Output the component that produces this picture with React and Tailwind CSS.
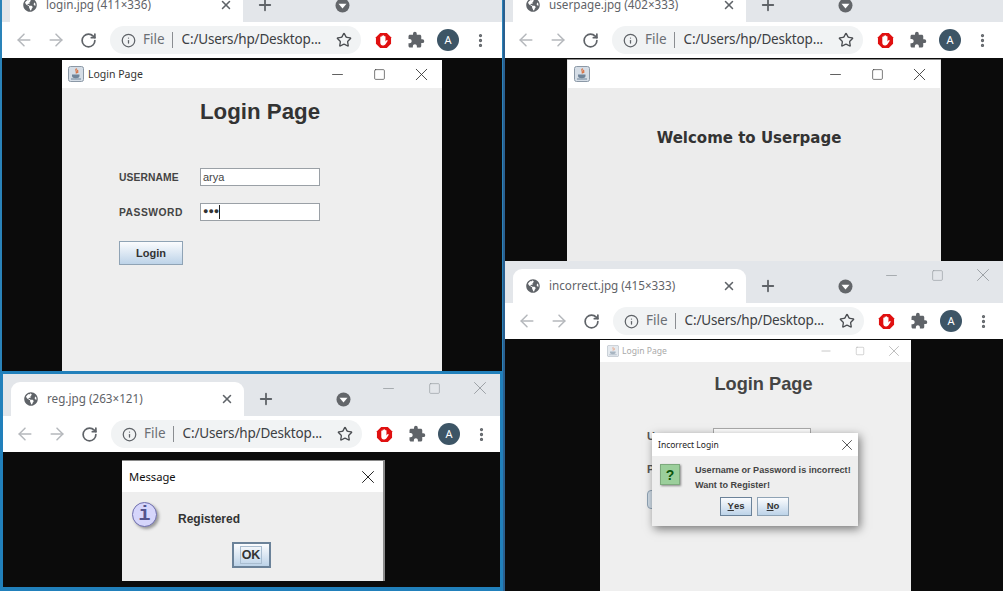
import React from "react";
import { ArrowLeft, ArrowRight, RotateCw, Info, Star, Plus, X, Minus, Square, EllipsisVertical } from "lucide-react";
import { FaGlobeAmericas } from "react-icons/fa";
import { MdExtension } from "react-icons/md";

const ui = "font-['Noto_Sans',sans-serif]";
const arial = "font-['Liberation_Sans',Arial,sans-serif]";

function StopIcon() {
  return (
    <svg width="17" height="17" viewBox="0 0 18 18">
      <path d="M5.5 1h7L17 5.500v7L12.500 17h-7L1 12.500v-7z" fill="#e01010" />
      <path d="M5.600 9V5.600c0-1 1.300-1 1.300 0V4.500c0-1 1.400-1 1.400 0v-.4c0-1 1.400-1 1.400 0v.9c0-1 1.400-1 1.400 0v5l.9-1.100c.7-.8 1.700 0 1.200.8l-2.100 3.400c-.5.8-1.200 1.200-2.200 1.200H8.300c-1.600 0-2.700-1.100-2.700-2.800z" fill="#fff" />
    </svg>
  );
}

function JavaIcon({ size = 16, faded }) {
  return (
    <svg width={size} height={size} viewBox="0 0 16 16" className={faded ? "opacity-60" : ""}>
      <rect x="0.5" y="0.5" width="15" height="15" rx="2" fill="#d5dde6" stroke="#8b98a6" />
      <path d="M8.500 2.500c-2 2 1 3-.5 5M10 4c-1 1 .5 1.500-.5 3" fill="none" stroke="#d9622b" strokeWidth="1.1" />
      <path d="M4 8.500h7.500v1.500c0 1.500-1.500 2.200-3.700 2.200S4 11.500 4 10z" fill="#6f8499" />
      <path d="M3 13h10" stroke="#6f8499" />
    </svg>
  );
}

function Toolbar({ pad }) {
  return (
    <div className={`flex h-[36px] shrink-0 items-center bg-white ${pad}`}>
      <span className="flex w-8 justify-center text-[#b5b8bc]"><ArrowLeft size={20} strokeWidth={1.8} /></span>
      <span className="flex w-8 justify-center text-[#b5b8bc]"><ArrowRight size={20} strokeWidth={1.8} /></span>
      <span className="flex w-8 justify-center text-[#5f6368]"><RotateCw size={17} strokeWidth={2.4} /></span>
      <div className={`ml-[6px] flex h-[28px] w-[251px] shrink-0 items-center rounded-full bg-[#f1f3f4] pl-[11px] ${ui}`}>
        <Info size={15} className="text-[#5f6368]" strokeWidth={2} />
        <span className="ml-[7px] text-[13.500px] leading-none text-[#6b6f74]">File</span>
        <span className="ml-[7px] h-[16px] w-px bg-[#8a8d91]" />
        <span className="ml-[9px] w-[146px] whitespace-nowrap text-[13.500px] leading-none tracking-[-0.17px] text-[#3c4043]">C:/Users/hp/Desktop...</span>
        <Star size={16} className="ml-[8px] shrink-0 text-[#4a4d51]" strokeWidth={2} />
      </div>
      <span className="ml-[6px] flex w-8 justify-center"><StopIcon /></span>
      <span className="ml-[1px] flex w-8 justify-center text-[#5f6368]"><MdExtension size={18} /></span>
      <span className={`flex w-8 justify-center ${ui}`}>
        <span className="flex h-[22px] w-[22px] items-center justify-center rounded-full bg-[#3d5566] text-[11px] text-white">A</span>
      </span>
      <span className="flex w-8 justify-center text-[#5f6368]"><EllipsisVertical size={17} strokeWidth={2.6} /></span>
    </div>
  );
}

function Browser({ title, cropped, pad = "pl-[6px]", className = "", children }) {
  return (
    <div className={`flex min-h-0 flex-col overflow-hidden bg-[#0b0b0b] ${className}`}>
      <div className={`relative flex shrink-0 items-end justify-start overflow-hidden bg-[#e3e6ea] ${cropped ? "h-[22px]" : "h-[42px]"} pl-[8px]`}>
        <div className={`flex h-[34px] w-[233px] shrink-0 items-center rounded-t-[9px] bg-white pl-[13px] ${ui}`}>
          <FaGlobeAmericas size={14} className="shrink-0 text-[#5f6368]" />
          <span className="ml-[9px] whitespace-nowrap text-[11.700px] leading-none text-[#5f6368]">{title}</span>
          <X size={14} strokeWidth={2.6} className="ml-auto mr-[10px] text-[#5f6368]" />
        </div>
        <span className="ml-[13px] flex h-[34px] items-center text-[#5f6368]"><Plus size={18} strokeWidth={2.4} /></span>
        <span className="ml-[61px] flex h-[34px] items-center">
          <svg width="15" height="15" viewBox="0 0 15 15"><circle cx="7.500" cy="7.500" r="7" fill="#63666a" /><path d="M3.500 5.800h8l-4 4.600z" fill="#fff" /></svg>
        </span>
        {!cropped && (
          <div className="absolute right-[-3px] top-[4px] flex text-[#8e9398]">
            <span className="flex h-[20px] w-[46px] items-center justify-center"><Minus size={17} strokeWidth={1} /></span>
            <span className="flex h-[20px] w-[46px] items-center justify-center"><Square size={13} strokeWidth={1.1} /></span>
            <span className="flex h-[20px] w-[46px] items-center justify-center"><X size={22} strokeWidth={0.9} /></span>
          </div>
        )}
      </div>
      <Toolbar pad={pad} />
      {children}
    </div>
  );
}

function TitleBar({ h, title, faded }) {
  const tone = faded ? "text-[#a9a9a9]" : "text-[#333]";
  const slot = faded ? "w-[34px]" : "w-[42px]";
  return (
    <div className={`flex shrink-0 items-center bg-white ${h} ${ui} ${faded ? "pl-[7px]" : "pl-[6px]"}`}>
      <JavaIcon size={faded ? 12 : 16} faded={faded} />
      {title && <span className={`leading-none ${faded ? "ml-[3px] text-[8.600px]" : "ml-[4px] text-[10.500px]"} ${tone}`}>{title}</span>}
      <div className={`ml-auto flex ${tone}`}>
        <span className={`flex items-center justify-center ${slot}`}><Minus size={faded ? 14 : 17} strokeWidth={1.1} /></span>
        <span className={`flex items-center justify-center ${slot}`}><Square size={faded ? 10 : 13} strokeWidth={1.2} /></span>
        <span className={`flex items-center justify-center ${slot}`}><X size={faded ? 18 : 21} strokeWidth={1} /></span>
      </div>
    </div>
  );
}

function JavaButton({ children, className = "" }) {
  return (
    <div className={`flex items-center justify-center border border-[#8fa3b5] bg-gradient-to-b from-[#fbfcfe] to-[#bdd3e8] font-bold text-[#333] ${arial} ${className}`}>
      {children}
    </div>
  );
}

function LoginFrame() {
  return (
    <div className="mx-auto mt-[2px] flex h-[311px] w-[380px] flex-col bg-[#eeeeee]">
      <TitleBar h="h-[28px]" title="Login Page" />
      <div className={`flex-1 ${arial}`}>
        <h1 className="mt-[10px] pl-[16px] text-center text-[22.300px] font-bold leading-[28px] text-[#333]">Login Page</h1>
        <div className="ml-[57px] mt-[42px] flex flex-col">
          <div className="flex items-center">
            <span className="w-[81px] pt-[2px] text-[10.300px] font-bold tracking-[0.1px] text-[#444]">USERNAME</span>
            <div className="flex h-[18px] w-[120px] items-center border border-[#9aa0a6] bg-white pl-[2px] pt-px text-[11px] text-[#444]">arya</div>
          </div>
          <div className="mt-[17px] flex items-center">
            <span className="w-[81px] pt-[2px] text-[10.300px] font-bold tracking-[0.5px] text-[#444]">PASSWORD</span>
            <div className="flex h-[18px] w-[120px] items-center border border-[#9aa0a6] bg-white pl-[2px] text-[9px] text-[#333]">●●●<span className="h-[14px] w-px bg-[#222]" /></div>
          </div>
          <JavaButton className="mt-[20px] h-[24px] w-[64px] text-[11px]">Login</JavaButton>
        </div>
      </div>
    </div>
  );
}

function RegFrame() {
  return (
    <div className="ml-[119px] mt-[8px] flex h-[121px] w-[263px] flex-col border-r-2 border-t border-[#8a8a8a] bg-[#eeeeee]">
      <div className={`flex h-[31px] shrink-0 items-center justify-between bg-white pl-[7px] pr-[4px] pt-px text-[11.200px] text-[#111] ${ui}`}>
        Message <X size={22} strokeWidth={1} />
      </div>
      <div className={`flex items-start ${arial}`}>
        <div className="ml-[10px] mt-[10px] flex h-[25px] w-[25px] items-center justify-center rounded-full border border-[#6f6fae] bg-[#d6d6fb] font-['Liberation_Mono',monospace] text-[20px] font-bold leading-none text-[#54548c] shadow-[2px_2px_3px_#9a9a9a]">i</div>
        <span className="ml-[21px] mt-[20px] text-[12px] font-bold leading-[14px] text-[#333]">Registered</span>
      </div>
      <div className="mt-[15px] flex justify-center pr-[3px]">
        <JavaButton className="h-[26px] w-[39px] border-2 !border-[#6b8299] text-[12.500px]">
          <span className="border border-[#a9bdd0] px-px leading-[16px]">OK</span>
        </JavaButton>
      </div>
    </div>
  );
}

function UserFrame() {
  return (
    <div className="ml-[62px] mt-px flex h-[202px] w-[374px] flex-col border-t border-[#8a8a8a] bg-[#ececec] px-px">
      <TitleBar h="h-[28px]" />
      <div className="mt-[40px] pr-[10px] text-center font-['DejaVu_Sans',sans-serif] text-[15px] font-bold leading-[20px] text-[#333]">Welcome to Userpage</div>
    </div>
  );
}

function IncorrectFrame() {
  return (
    <div className="relative ml-[95px] mt-px flex w-[311px] flex-1 flex-col bg-[#efefef]">
      <TitleBar h="h-[22px]" title="Login Page" faded />
      <div className={`pl-[16px] pt-[11px] text-center text-[18.200px] font-bold leading-[22px] text-[#444] ${arial}`}>Login Page</div>
      <div className={`ml-[47px] mt-[33px] text-[11px] font-bold text-[#555] ${arial}`}>
        <div className="relative">
          <span>U</span>
          <div className="absolute left-[66px] top-0 h-[12px] w-[98px] border border-[#aaa] bg-white" />
        </div>
        <div className="mt-[16px]">P</div>
        <div className="mt-[13px] h-[19px] w-[12px] rounded-sm border border-[#8fa3b5] bg-[#cfdbe6]" />
      </div>
      <div className={`absolute left-[52px] top-[93px] flex h-[93px] w-[206px] flex-col bg-[#eeeeee] shadow-[2px_3px_9px_rgba(0,0,0,0.5)] ${arial}`}>
        <div className={`flex h-[23px] shrink-0 items-center justify-between bg-white pl-[6px] pr-[2px] pt-px text-[8.500px] text-[#222] ${ui}`}>
          Incorrect Login <X size={18} strokeWidth={1} />
        </div>
        <div className="flex">
          <div className="ml-[8px] mt-[8px] flex h-[21px] w-[20px] items-center justify-center border border-[#7daa7d] bg-[#9bcf9b] text-[14px] font-bold leading-none text-[#0c550c] shadow-[1px_1px_2px_#888]">?</div>
          <div className="ml-[15px] mt-[7px] whitespace-nowrap text-[9.100px] font-bold leading-[14.500px] text-[#444]">
            <div>Username or Password is incorrect!</div>
            <div>Want to Register!</div>
          </div>
        </div>
        <div className="ml-[68px] mt-[5px] flex gap-[5px]">
          <JavaButton className="h-[19px] w-[32px] !border-[#6b8299] text-[9.500px]"><span className="underline">Y</span>es</JavaButton>
          <JavaButton className="h-[19px] w-[32px] text-[9.500px]"><span className="underline">N</span>o</JavaButton>
        </div>
      </div>
    </div>
  );
}

export default function App() {
  return (
    <div className="flex h-[591px] w-[1003px] overflow-hidden bg-[#0b0b0b]">
      <div className="flex h-full w-[503px] shrink-0 flex-col">
        <Browser title="login.jpg (411×336)" cropped className="h-[371px] shrink-0 border-l-2 border-r border-[#2a83b9]">
          <LoginFrame />
        </Browser>
        <Browser title="reg.jpg (263×121)" className="flex-1 border-x-[3px] border-t-[3px] border-b-[4px] border-[#2180bb]">
          <RegFrame />
        </Browser>
      </div>
      <div className="flex h-full flex-1 flex-col border-l-2 border-[#2a5f8f]">
        <Browser title="userpage.jpg (402×333)" cropped pad="pl-[5px]" className="h-[261px] shrink-0">
          <UserFrame />
        </Browser>
        <Browser title="incorrect.jpg (415×333)" pad="pl-[6px]" className="flex-1">
          <IncorrectFrame />
        </Browser>
      </div>
    </div>
  );
}
